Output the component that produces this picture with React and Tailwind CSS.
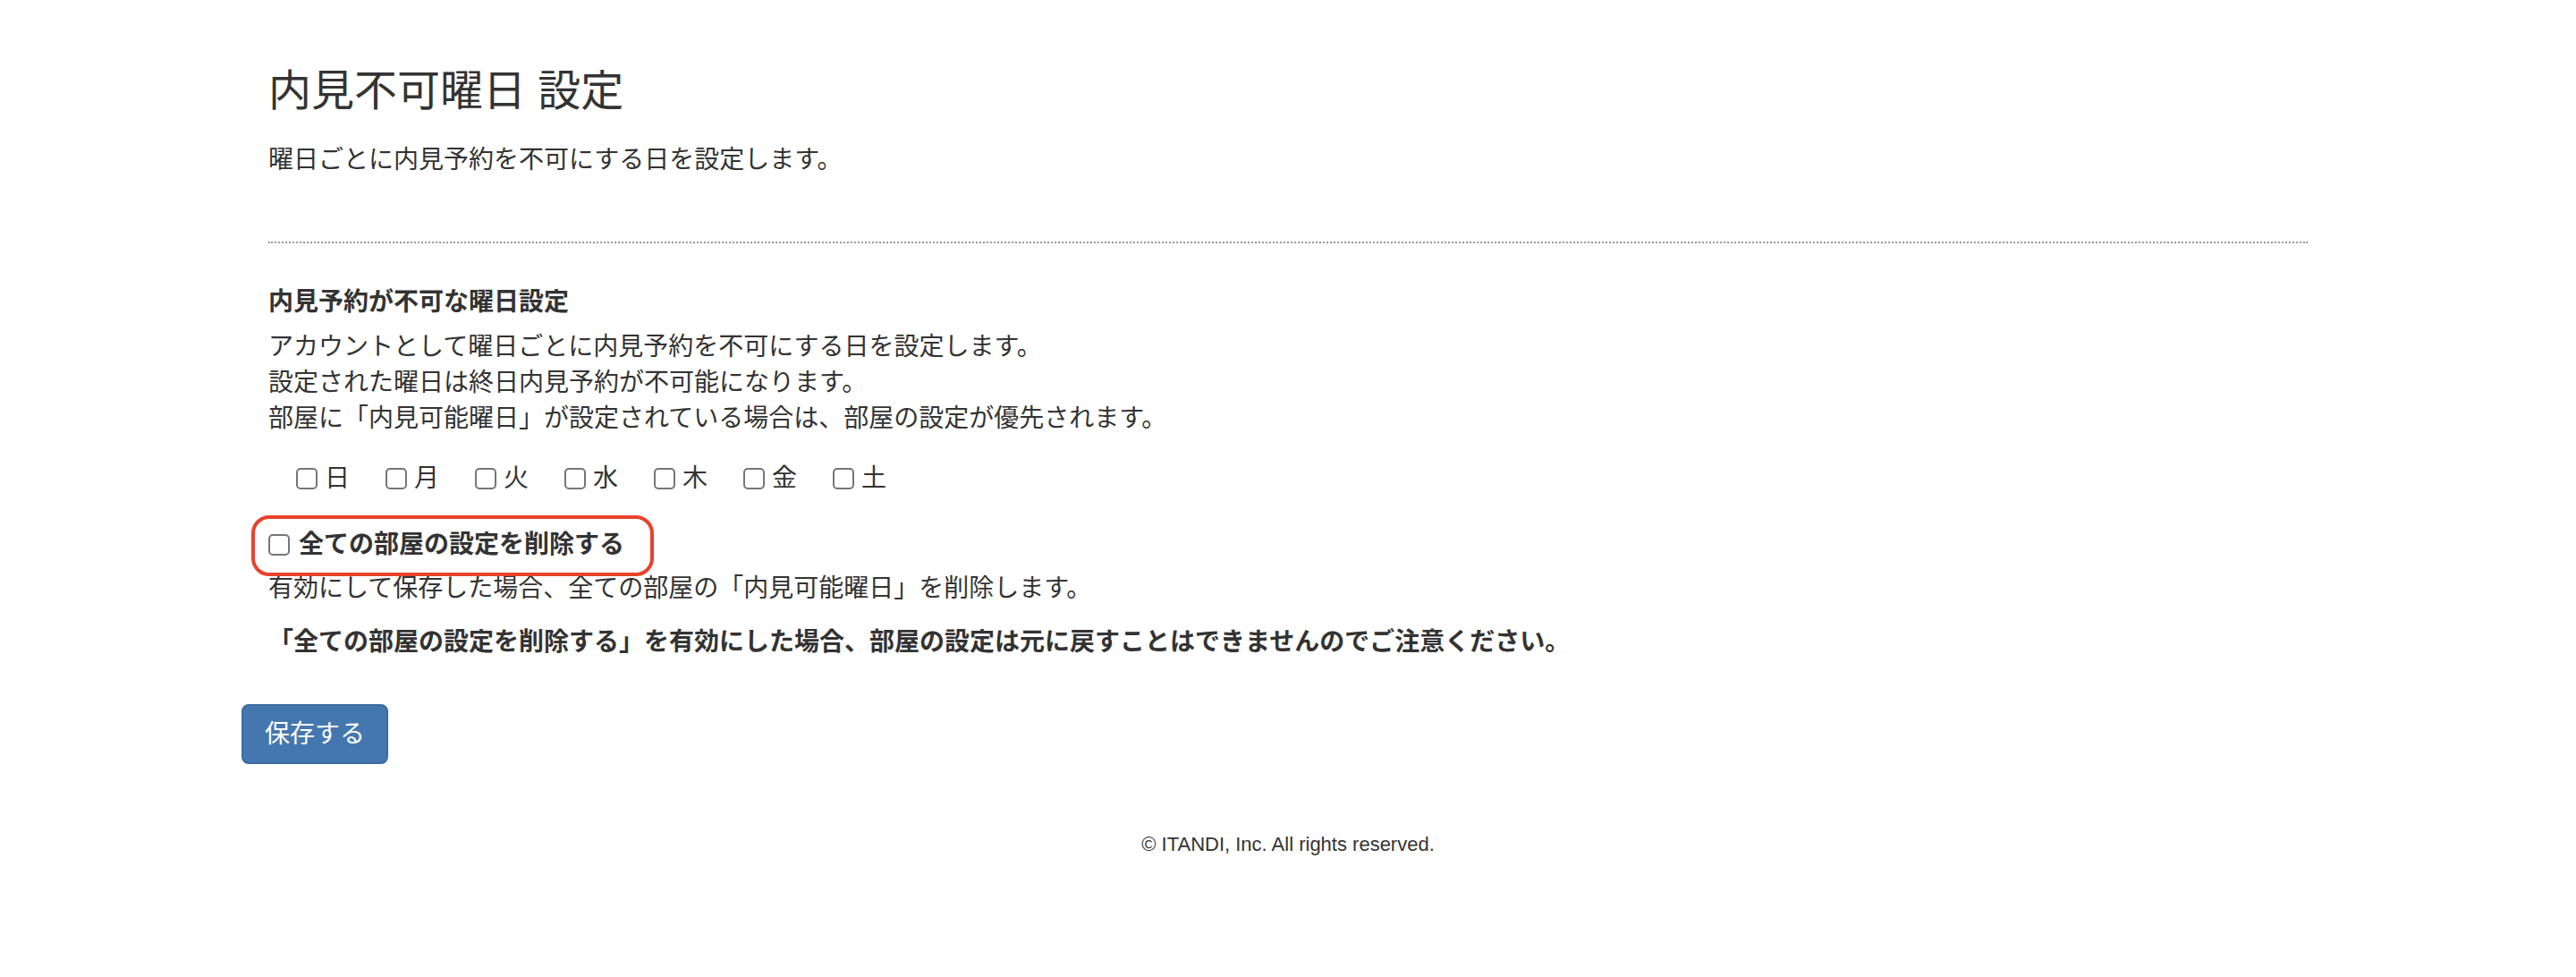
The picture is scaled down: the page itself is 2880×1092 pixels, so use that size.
import React from 'react';

const DAYS = ['日', '月', '火', '水', '木', '金', '土'];

const font = { fontFamily: '"Liberation Sans", "Noto Sans CJK JP", sans-serif' };

function Box({ className = '' }) {
    return <input type="checkbox" className={`appearance-none shrink-0 w-[24px] h-[24px] border-2 border-[#767676] rounded-[5px] bg-white ${className}`} />;
}

export default function App() {
    return (
        <div style={font} className="min-h-[1092px] bg-white text-[#333] flex flex-col">
            <div className="w-[2340px] mx-auto px-[30px] pt-[75px]">
                <h3 className="text-[48px] leading-[53px] font-normal">内見不可曜日 設定</h3>
                <p className="mt-[31px] text-[28px] leading-[40px]">曜日ごとに内見予約を不可にする日を設定します。</p>

                <hr className="mt-[71px] border-0 border-t-2 border-dotted border-[#9a9a9a]" />

                <h4 className="mt-[46px] text-[28px] leading-[40px] font-bold">内見予約が不可な曜日設定</h4>
                <div className="mt-[10px] text-[28px] leading-[40px]">
                    <p>アカウントとして曜日ごとに内見予約を不可にする日を設定します。</p>
                    <p>設定された曜日は終日内見予約が不可能になります。</p>
                    <p>部屋に「内見可能曜日」が設定されている場合は、部屋の設定が優先されます。</p>
                </div>

                <div className="mt-[27px] pl-[31px] flex gap-[40px] text-[28px] leading-[40px]">
                    {DAYS.map(d => (
                        <label key={d} className="flex items-center gap-[8px]">
                            <Box />
                            <span>{d}</span>
                        </label>
                    ))}
                </div>

                <label className="mt-[34px] relative inline-flex items-center gap-[10px] text-[28px] leading-[40px] font-bold">
                    <Box />
                    <span>全ての部屋の設定を削除する</span>
                    <span className="absolute -top-[13px] -bottom-[15px] -left-[19px] -right-[33px] border-[4px] border-[#e8432b] rounded-[20px] pointer-events-none" />
                </label>
                <p className="mt-[9px] text-[28px] leading-[40px]">有効にして保存した場合、全ての部屋の「内見可能曜日」を削除します。</p>
                <p className="mt-[20px] text-[28px] leading-[40px] font-bold">「全ての部屋の設定を削除する」を有効にした場合、部屋の設定は元に戻すことはできませんのでご注意ください。</p>

                <button className="mt-[49px] -ml-[30px] h-[67px] px-[24px] flex items-center bg-[#4577af] border-2 border-[#3c6aa0] rounded-[8px] text-white text-[28px] leading-[40px]">
                    保存する
                </button>
            </div>

            <footer className="mt-[74px] text-center text-[22px] leading-[32px] text-[#333]">© ITANDI, Inc. All rights reserved.</footer>
        </div>
    );
}
